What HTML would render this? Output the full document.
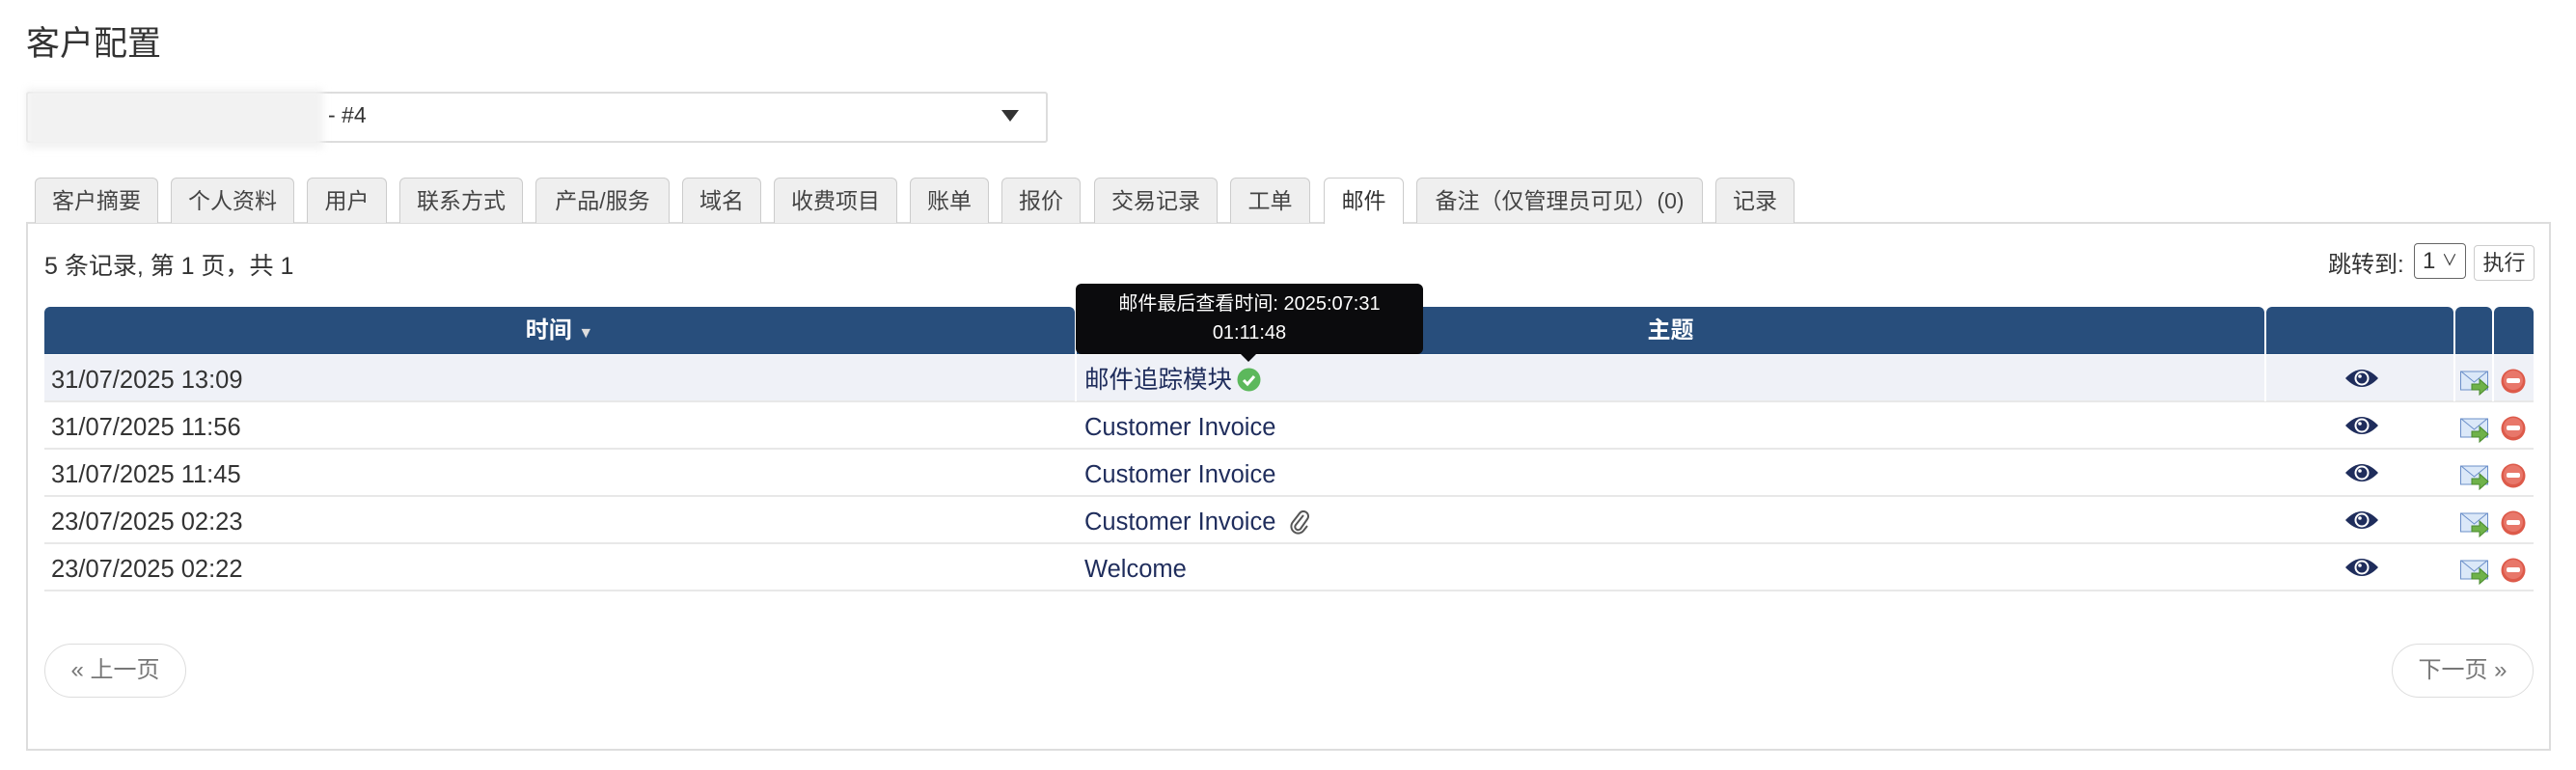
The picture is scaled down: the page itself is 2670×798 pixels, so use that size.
<!DOCTYPE html>
<html><head><meta charset="utf-8"><style>
*{box-sizing:border-box;margin:0;padding:0}
body{width:2670px;height:798px;background:#fff;font-family:"Liberation Sans","Noto Sans CJK SC",sans-serif;color:#333;position:relative;overflow:hidden}
.a{position:absolute}
.tab{position:absolute;top:184px;height:47px;border:1px solid #ccc;border-bottom:none;border-radius:6px 6px 0 0;background:#efefef;font-size:23px;color:#444;text-align:center;line-height:46px}
.th{position:absolute;top:318px;height:49px;background:#284e7c;border-radius:6px 6px 0 0;color:#fff;font-weight:bold;font-size:24px;text-align:center;line-height:49px}
.row{position:absolute;left:46px;width:2580px;height:49px;border-bottom:2px solid #e8e8e8;font-size:25.5px;line-height:52px}
.row .d{position:absolute;left:7px;color:#333}
.row .s{position:absolute;left:1078px;color:#1f2d5c}
.row .eye{position:absolute;left:2385px;top:13px}
.row .mail{position:absolute;left:2504px;top:16px}
.row .del{position:absolute;left:2546px;top:14px}
.vs{position:absolute;top:0;width:2px;height:48px;background:#fff}
.pg{position:absolute;top:667px;height:56px;border:1px solid #ddd;border-radius:28px;font-size:24px;color:#777;text-align:center;line-height:54px}
</style></head><body>
<div class="a" style="left:27px;top:17px;font-size:35px;color:#333">客户配置</div>
<div class="a" style="left:27px;top:95px;width:1059px;height:53px;border:2px solid #ddd;border-radius:3px"></div>
<div class="a" style="left:27px;top:92px;width:308px;height:62px;background:#f2f2f2;filter:blur(4px)"></div>
<div class="a" style="left:340px;top:106px;font-size:23px;color:#333">- #4</div>
<div class="a" style="left:1038px;top:114px;width:0;height:0;border-left:9px solid transparent;border-right:9px solid transparent;border-top:12px solid #333"></div>

<div class="a" style="left:27px;top:230px;width:2617px;height:548px;border:2px solid #ddd"></div>
<div class="tab" style="left:36px;width:128px">客户摘要</div>
<div class="tab" style="left:177px;width:128px">个人资料</div>
<div class="tab" style="left:318px;width:83px">用户</div>
<div class="tab" style="left:414px;width:128px">联系方式</div>
<div class="tab" style="left:555px;width:139px">产品/服务</div>
<div class="tab" style="left:707px;width:82px">域名</div>
<div class="tab" style="left:802px;width:128px">收费项目</div>
<div class="tab" style="left:943px;width:82px">账单</div>
<div class="tab" style="left:1038px;width:82px">报价</div>
<div class="tab" style="left:1134px;width:128px">交易记录</div>
<div class="tab" style="left:1275px;width:83px">工单</div>
<div class="tab" style="left:1372px;width:83px;background:#fff;height:48px;color:#333">邮件</div>
<div class="tab" style="left:1468px;width:297px">备注（仅管理员可见）(0)</div>
<div class="tab" style="left:1778px;width:82px">记录</div>

<div class="a" style="left:46px;top:256px;font-size:25px;color:#333">5 条记录, 第 1 页，共 1</div>
<div class="a" style="left:2413px;top:254px;font-size:24px;color:#333">跳转到:</div>
<div class="a" style="left:2502px;top:252px;width:54px;height:37px;border:1px solid #666;border-radius:4px;font-size:24px;padding-left:8px;line-height:35px">1 <span style="font-size:16px;position:relative;top:-3px">&#x2228;</span></div>
<div class="a" style="left:2564px;top:254px;width:63px;height:37px;border:1px solid #ccc;border-radius:4px;font-size:22px;text-align:center;line-height:35px">执行</div>

<div class="th" style="left:46px;width:1068px">时间 <span style="font-size:16px;color:#ddd">▼</span></div>
<div class="th" style="left:1116px;width:1231px">主题</div>
<div class="th" style="left:2349px;width:194px"></div>
<div class="th" style="left:2545px;width:38px"></div>
<div class="th" style="left:2585px;width:41px"></div>

<svg width="0" height="0" style="position:absolute"><defs>
<g id="eye"><path d="M0 11 Q17 -7 34 11 Q17 29 0 11Z" fill="#1f2d5c"/><circle cx="17" cy="11" r="7.5" fill="#fff"/><circle cx="17" cy="11" r="5.5" fill="#1f2d5c"/><circle cx="15" cy="9" r="1.8" fill="#fff"/></g>
<g id="mail"><rect x="0.5" y="1" width="28" height="19" fill="#dbe8f8" stroke="#6b8fc9"/><path d="M1 1 L14.5 12 L28 1" fill="none" stroke="#6b8fc9"/><path d="M12 14 h8 v-5 l9 8 -9 8 v-5 h-8z" fill="#6fb24a" stroke="#4a8a2f"/></g>
<g id="del"><circle cx="13" cy="13" r="12.5" fill="#dd5a4a"/><circle cx="13" cy="12" r="10" fill="#e8776a"/><rect x="6" y="10" width="14" height="5" rx="2" fill="#fff"/></g>
</defs></svg>

<div class="row" style="top:368px;background:#eff1f7"><span class="d">31/07/2025 13:09</span><span class="s">邮件追踪模块</span>
<svg class="a" style="left:1236px;top:13px" width="25" height="25"><circle cx="12.5" cy="12.5" r="12" fill="#5cb85c"/><path d="M7 13 l4 4 l7 -8" fill="none" stroke="#fff" stroke-width="3"/></svg>
<div class="vs" style="left:1068px"></div><div class="vs" style="left:2301px"></div><div class="vs" style="left:2497px"></div><div class="vs" style="left:2537px"></div>
<svg class="eye" width="34" height="22"><use href="#eye"/></svg><svg class="mail" width="30" height="26"><use href="#mail"/></svg><svg class="del" width="26" height="26"><use href="#del"/></svg></div>
<div class="row" style="top:417px"><span class="d">31/07/2025 11:56</span><span class="s">Customer Invoice</span><svg class="eye" width="34" height="22"><use href="#eye"/></svg><svg class="mail" width="30" height="26"><use href="#mail"/></svg><svg class="del" width="26" height="26"><use href="#del"/></svg></div>
<div class="row" style="top:466px"><span class="d">31/07/2025 11:45</span><span class="s">Customer Invoice</span><svg class="eye" width="34" height="22"><use href="#eye"/></svg><svg class="mail" width="30" height="26"><use href="#mail"/></svg><svg class="del" width="26" height="26"><use href="#del"/></svg></div>
<div class="row" style="top:515px"><span class="d">23/07/2025 02:23</span><span class="s">Customer Invoice</span>
<svg class="a" style="left:1290px;top:11px" width="22" height="28"><path d="M15 8 L7 18 a3 3 0 0 0 5 4 L19 12 a5 5 0 0 0 -8 -6 L4 15 a7 7 0 0 0 11 9 L19 19" fill="none" stroke="#555" stroke-width="2"/></svg>
<svg class="eye" width="34" height="22"><use href="#eye"/></svg><svg class="mail" width="30" height="26"><use href="#mail"/></svg><svg class="del" width="26" height="26"><use href="#del"/></svg></div>
<div class="row" style="top:564px"><span class="d">23/07/2025 02:22</span><span class="s">Welcome</span><svg class="eye" width="34" height="22"><use href="#eye"/></svg><svg class="mail" width="30" height="26"><use href="#mail"/></svg><svg class="del" width="26" height="26"><use href="#del"/></svg></div>

<div class="a" style="left:1115px;top:294px;width:360px;height:73px;background:#0b0b0d;border-radius:6px;color:#fff;font-size:20px;text-align:center;line-height:30px;padding-top:6px">邮件最后查看时间: 2025:07:31<br>01:11:48</div>
<div class="a" style="left:1285px;top:366px;width:0;height:0;border-left:9px solid transparent;border-right:9px solid transparent;border-top:9px solid #0b0b0d"></div>

<div class="pg" style="left:46px;width:147px">« 上一页</div>
<div class="pg" style="left:2479px;width:147px">下一页 »</div>
</body></html>
